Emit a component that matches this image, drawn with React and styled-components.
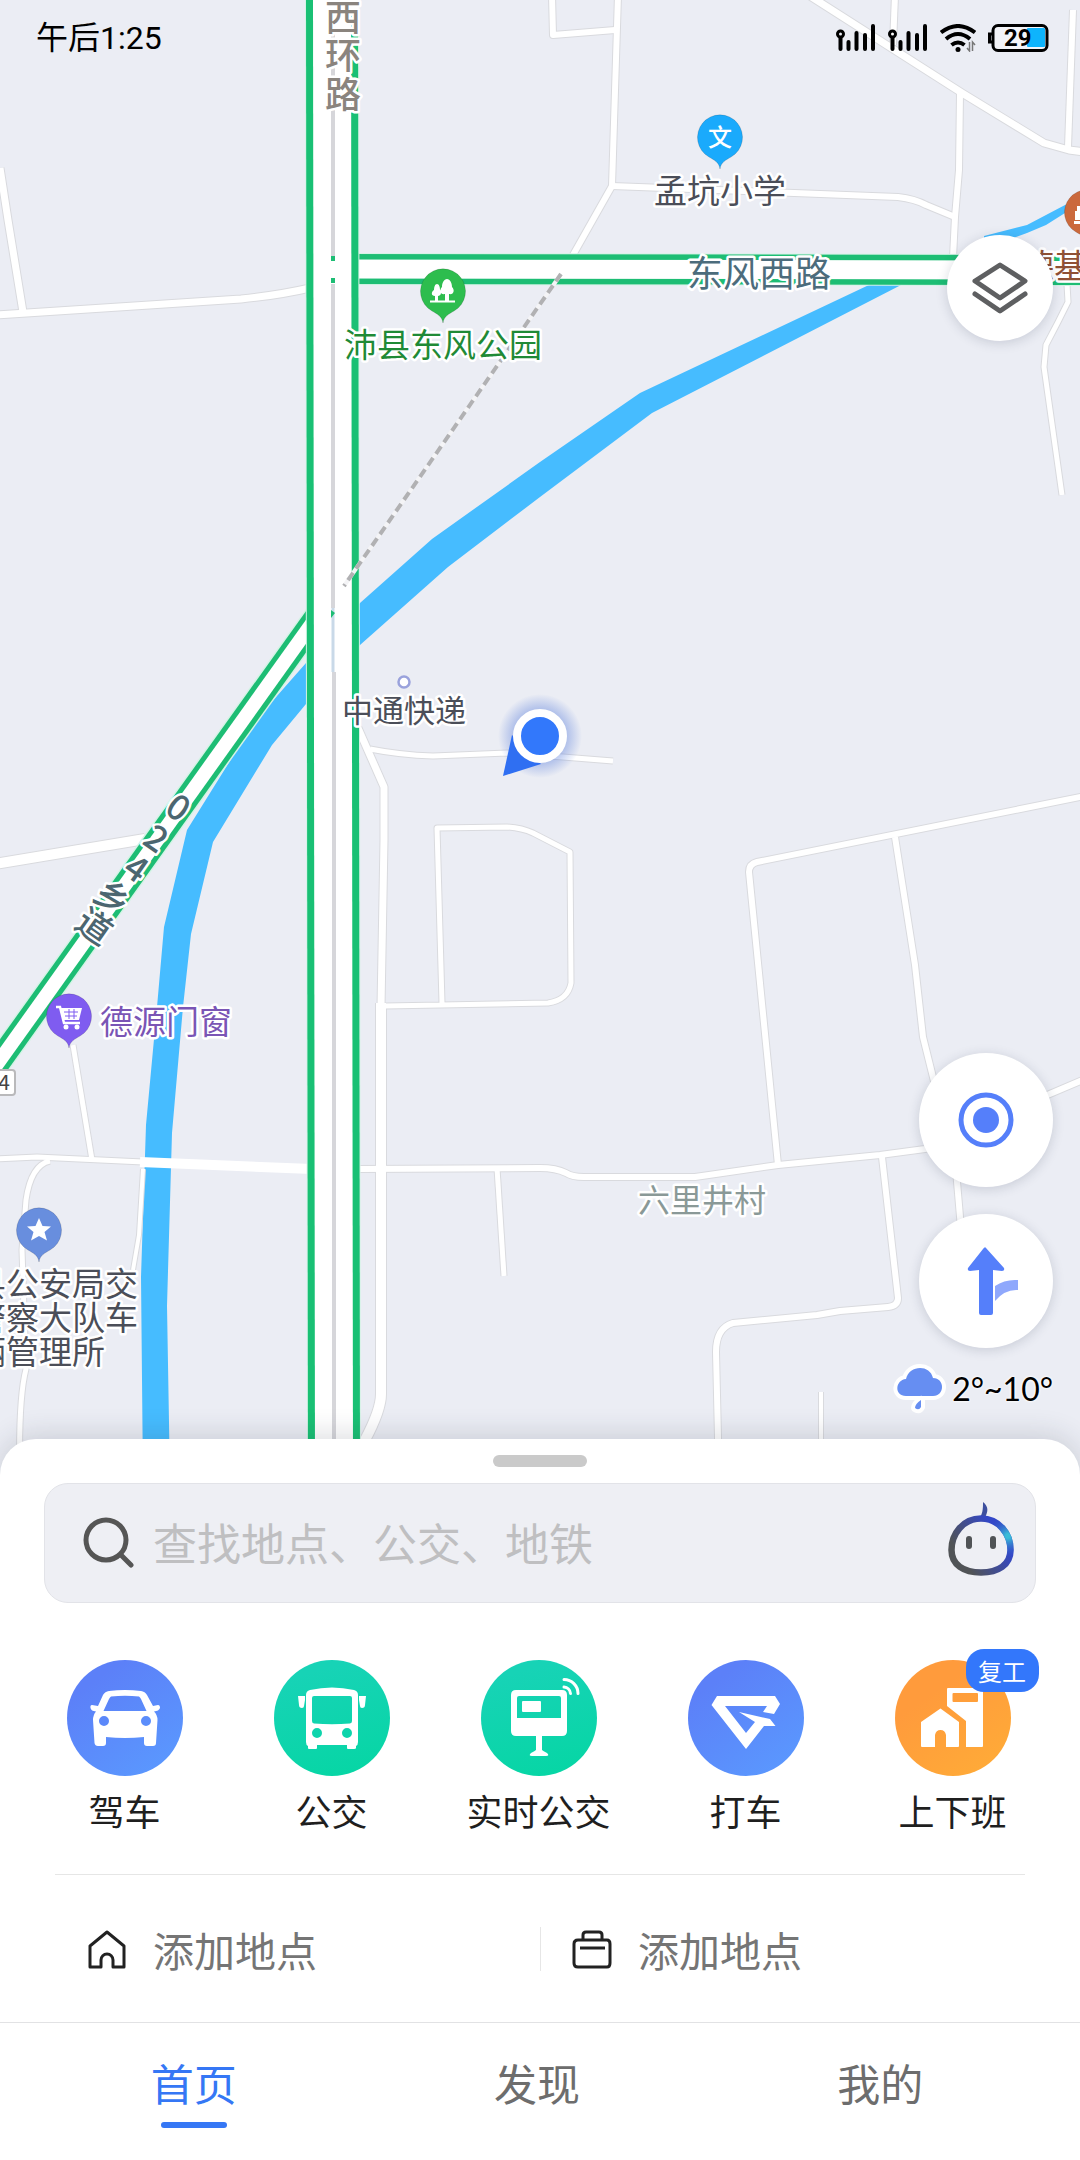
import React, { useState } from 'react';
import styled, { createGlobalStyle } from 'styled-components';

const GlobalStyle = createGlobalStyle`
  * {
    box-sizing: border-box;
  }
  body {
    margin: 0;
    background: #fff;
    font-family: 'Noto Sans CJK SC', sans-serif;
  }
  button,
  input {
    font: inherit;
  }
`;

const Screen = styled.div`
  display: flex;
  flex-direction: column;
  min-height: 100vh;
`;

const MapArea = styled.main`
  position: relative;
  display: flex;
  flex: 1;
  flex-direction: column;
  overflow: hidden;
  background: #ebedf4;
`;

const MapCanvas = styled.svg`
  position: absolute;
  inset: 0;
  width: 100%;
  height: 100%;
`;

const MapLabel = styled.text`
  font-family: 'Noto Sans CJK SC', sans-serif;
  font-size: ${({ $size }) => $size || 33}px;
  fill: ${({ $color }) => $color || '#4b4e58'};
  stroke: #fff;
  stroke-width: 5px;
  stroke-linejoin: round;
  paint-order: stroke;
  text-anchor: ${({ $anchor }) => $anchor || 'middle'};
`;

const RoadLabel = styled(MapLabel)`
  font-weight: 500;
`;

const RoadNumber = styled(MapLabel)`
  stroke: none;
`;

const PinGlyph = styled(MapLabel)`
  font-weight: 500;
  stroke: none;
`;

const StatusBar = styled.header`
  position: relative;
  display: flex;
  align-items: center;
  justify-content: space-between;
  height: 76px;
  padding: 0 31px 0 36px;
  color: #000;
`;

const Clock = styled.time`
  font-family: Roboto, 'Noto Sans CJK SC', sans-serif;
  font-size: 32px;
  line-height: 44px;
`;

const StatusIcons = styled.div`
  display: flex;
  gap: 12px;
`;

const BatteryText = styled.text`
  font-family: Roboto, sans-serif;
  font-size: 24px;
  font-weight: 700;
`;

const RoundButton = styled.button`
  display: flex;
  align-items: center;
  justify-content: center;
  width: ${({ $size }) => $size}px;
  height: ${({ $size }) => $size}px;
  padding: 0;
  border: 0;
  border-radius: 50%;
  background: #fff;
  box-shadow: 0 2px 12px rgba(40, 50, 80, 0.18);
`;

const MapControls = styled.div`
  position: relative;
  display: flex;
  flex: 1;
  flex-direction: column;
  align-items: flex-end;
  justify-content: space-between;
  padding: 159px 27px 62px;
`;

const ControlStack = styled.div`
  display: flex;
  flex-direction: column;
  align-items: flex-end;
  gap: 27px;
`;

const Weather = styled.div`
  display: flex;
  align-items: center;
  gap: 6px;
  margin-top: -14px;
  font-family: Lato, 'Noto Sans CJK SC', sans-serif;
  font-size: 32px;
  line-height: 56px;
  color: #000;
  text-shadow: 0 0 3px #fff, 0 0 3px #fff;
`;

const Sheet = styled.section`
  position: relative;
  margin-top: -40px;
  padding-top: 16px;
  border-radius: 36px 36px 0 0;
  background: #fff;
  box-shadow: 0 -4px 28px rgba(40, 45, 60, 0.16);
`;

const Handle = styled.div`
  width: 94px;
  height: 12px;
  margin: 0 auto 16px;
  border-radius: 6px;
  background: #cacaca;
`;

const SearchForm = styled.form`
  display: flex;
  align-items: center;
  gap: 18px;
  height: 120px;
  margin: 0 44px;
  padding: 0 21px 2px 38px;
  border: 1px solid #e2e3e8;
  border-radius: 24px;
  background: #eeeff4;
`;

const SearchInput = styled.input`
  flex: 1;
  min-width: 0;
  padding: 0;
  border: 0;
  outline: 0;
  background: transparent;
  font-size: 44px;
  line-height: 60px;
  color: #222;

  &::placeholder {
    color: #bfbfc1;
    opacity: 1;
  }
`;

const BotButton = styled.button`
  display: flex;
  margin-bottom: 6px;
  padding: 0;
  border: 0;
  background: none;
`;

const Shortcuts = styled.div`
  display: grid;
  grid-template-columns: repeat(5, 1fr);
  padding: 57px 24px 40px 21px;
`;

const Shortcut = styled.button`
  display: flex;
  flex-direction: column;
  align-items: center;
  gap: 10px;
  padding: 0;
  border: 0;
  background: none;
  font-size: 36px;
  line-height: 48px;
  color: #1f1f1f;
`;

const ShortcutIcon = styled.span`
  position: relative;
  width: 116px;
  height: 116px;
  border-radius: 50%;
  background: ${({ $fill }) => $fill};

  svg {
    display: block;
  }
`;

const Badge = styled.span`
  position: absolute;
  top: -11px;
  left: 71px;
  width: 73px;
  border-radius: 18px;
  background: #3377fb;
  color: #fff;
  font-size: 24px;
  line-height: 43px;
  text-align: center;
`;

const Places = styled.div`
  display: grid;
  grid-template-columns: 1fr 1fr;
  margin: 0 55px;
  padding: 52px 0 51px;
  border-top: 1px solid #e6e6e6;
`;

const Place = styled.button`
  display: flex;
  align-items: center;
  gap: 26px;
  height: 44px;
  padding: 0 0 0 31px;
  border: 0;
  border-left: 1px solid ${({ $divided }) => ($divided ? '#e6e6e6' : 'transparent')};
  background: none;
  font-size: 41px;
  line-height: 44px;
  color: #757575;
`;

const TabBar = styled.nav`
  position: relative;
  display: grid;
  grid-template-columns: repeat(3, 1fr);
  padding: 29px 28px 32px 22px;
  border-top: 1px solid #e2e2e4;
  background: #fff;
`;

const Tab = styled.button`
  display: flex;
  flex-direction: column;
  align-items: center;
  gap: 10px;
  padding: 0;
  border: 0;
  background: none;
  font-size: 43px;
  line-height: 60px;
  color: ${({ $active }) => ($active ? '#3577f5' : '#6d6d6d')};

  &::after {
    content: '';
    width: 66px;
    height: 6px;
    border-radius: 3px;
    background: ${({ $active }) => ($active ? '#3577f5' : 'transparent')};
  }
`;

const minorRoads = [
  { d: 'M0 168L8 220L23 312', w: 7 },
  { d: 'M-5 315L134 306L241 299Q280 295 310 288', w: 7 },
  { d: 'M552 -5L553 35L615 30', w: 6 },
  { d: 'M618 -5L612 186L573 255', w: 6 },
  { d: 'M612 186L898 197Q915 199 926 205L955 217', w: 6 },
  { d: 'M810 -4L962 93L1044 143L1069 150L1085 152', w: 7 },
  { d: 'M895 -5L893 45', w: 6 },
  { d: 'M960 93L959 170L955 217L953 258', w: 6 },
  { d: 'M1073 10L1068 147', w: 6 },
  { d: 'M1067 284L1068 302L1058 322L1046 345L1044 367L1062 495', w: 5 },
  { d: 'M-5 864L145 839', w: 10 },
  { d: 'M358 728L384 787V840L381 1007', w: 7 },
  { d: 'M370 749Q400 755 433 756L507 753L563 757L613 761', w: 5 },
  { d: 'M442 1003L437 828L507 827Q522 828 533 833L570 852L571 983Q568 1000 548 1003L385 1006', w: 5 },
  { d: 'M381 1003V1394Q381 1410 365 1440L350 1470', w: 10 },
  { d: 'M1085 796L757 862Q749 864 749 872L778 1165', w: 6 },
  { d: 'M895 837L915 965L923 1037L956 1170L962 1240', w: 6 },
  { d: 'M-5 1159L37 1157L143 1162', w: 5 },
  { d: 'M358 1169L540 1168Q556 1168 566 1173Q572 1177 584 1177L695 1177L778 1165L880 1155L925 1149Q1000 1136 1045 1096L1085 1079', w: 6 },
  { d: 'M882 1157L898 1298Q898 1306 888 1307L840 1311L817 1315L733 1323Q716 1328 716 1352L719 1480', w: 6 },
  { d: 'M821 1392V1480', w: 4 },
  { d: 'M497 1168L504 1276', w: 5 },
  { d: 'M73 1045L92 1160', w: 5 },
  { d: 'M50 1161Q31 1165 26 1200L22 1250L26 1369Q18 1400 20 1480', w: 5 },
  { d: 'M143 1169L139 1235L133 1270', w: 4 },
];

const RIVER =
  'M871 284L984 258V236L1027 225L1065 205L1085 195V205L1065 213L1046 225L1027 233L1000 243L903 284L652 413L540 497L448 567L360 645L306 704L272 745L213 842L191 934L183 1007L172 1133L167 1306L170 1480H143L141 1277L146 1125L157 1007L164 927L187 830L238 748L269 705L306 663L360 603L432 539L540 462L640 393Z';

// Pin with its round head centred on (x, y)
function Pin({ x, y, color, children }) {
  return (
    <g transform={`translate(${x} ${y})`}>
      <path
        d="M0 32C-1 25 -6 23 -11 20A22.5 22.5 0 1 1 11 20C6 23 1 25 0 32Z"
        fill={color}
        stroke="#00000022"
        strokeWidth="1"
      />
      {children}
    </g>
  );
}

function CityMap() {
  return (
    <MapCanvas viewBox="0 0 1080 1480" preserveAspectRatio="xMidYMin slice" role="img" aria-label="地图">
      <defs>
        <radialGradient id="glow">
          <stop offset="0.5" stopColor="#4a72d8" stopOpacity="0.5" />
          <stop offset="1" stopColor="#4a72d8" stopOpacity="0" />
        </radialGradient>
      </defs>
      <path d={RIVER} fill="#46bcff" />
      <g fill="none" strokeLinejoin="round">
        {minorRoads.map(({ d, w }) => (
          <path key={d} d={d} stroke="#d9dade" strokeWidth={w + 2} />
        ))}
        {minorRoads.map(({ d, w }) => (
          <path key={d} d={d} stroke="#fff" strokeWidth={w} />
        ))}
        <path d="M140 1162L312 1169" stroke="#fff" strokeWidth="10" />

        <path d="M333 594L-10 1074" stroke="#d5f3e6" strokeWidth="27" />
        <path d="M333 594L-10 1074" stroke="#1dbd74" strokeWidth="24" />
        <path d="M333 594L-10 1074" stroke="#fff" strokeWidth="14" />
        <path d="M340 269L1085 270" stroke="#d5f3e6" strokeWidth="32" />
        <path d="M340 269L1085 270" stroke="#1dbd74" strokeWidth="30" />
        <path d="M340 269L1085 270" stroke="#fff" strokeWidth="19" />

        <path d="M332 -5L334 1480" stroke="#d5f3e6" strokeWidth="54" />
        <path d="M332 -5L334 1480" stroke="#19c074" strokeWidth="52" />
        <path d="M332 -5L334 1480" stroke="#fff" strokeWidth="38" />
        <path d="M333 -5V256M333 284V608M334 672V1480" stroke="#d6d6da" strokeWidth="4" />
        <path d="M333 608V672" stroke="#c9d9e8" strokeWidth="3" />
        <path d="M333 256V261M333 278V283" stroke="#1dbd74" strokeWidth="4" />
        <path d="M331 610L335 613L331 618Z" fill="#1dbd74" />
        <path d="M561 274L344 586" stroke="#f4f4f6" strokeWidth="4" />
        <path d="M561 274L344 586" stroke="#b1b1b3" strokeWidth="4" strokeDasharray="9 5" />
      </g>

      <RoadLabel x="343" y="31" $size={36} $color="#8a847e">西</RoadLabel>
      <RoadLabel x="343" y="69" $size={36} $color="#8a847e">环</RoadLabel>
      <RoadLabel x="343" y="108" $size={36} $color="#8a847e">路</RoadLabel>
      <MapLabel x="759" y="287" $size={36} $color="#4c6c7c">东风西路</MapLabel>
      <MapLabel x="720" y="203">孟坑小学</MapLabel>
      <MapLabel x="443" y="357" $color="#1f8a36">沛县东风公园</MapLabel>
      <MapLabel x="404" y="722" $size={31}>中通快递</MapLabel>
      <MapLabel x="166" y="1034" $color="#7a55b5">德源门窗</MapLabel>
      <MapLabel x="702" y="1212" $size={32} $color="#8a9997">六里井村</MapLabel>
      <MapLabel x="-27" y="1296" $anchor="start">县公安局交</MapLabel>
      <MapLabel x="-27" y="1330" $anchor="start">警察大队车</MapLabel>
      <MapLabel x="-27" y="1364" $anchor="start">辆管理所</MapLabel>
      <MapLabel x="1021" y="278" $anchor="start" $color="#8f5034">德基</MapLabel>

      {[
        ['0', 178, 808],
        ['2', 156, 839],
        ['4', 136, 869],
        ['乡', 112, 898],
        ['道', 94, 927],
      ].map(([char, x, y]) => (
        <RoadLabel key={char} transform={`translate(${x} ${y}) rotate(35)`} y="12" $size={35} $color="#4c6670">
          {char}
        </RoadLabel>
      ))}

      <rect x="-30" y="1070" width="45" height="25" rx="3" fill="#fff" stroke="#b9b9bb" strokeWidth="2" />
      <RoadNumber x="4" y="1090" $size={21} $color="#444">4</RoadNumber>

      <Pin x={720} y={137} color="#1aaafc">
        <PinGlyph y="9" $size={24} $color="#fff">文</PinGlyph>
      </Pin>
      <Pin x={443} y={291} color="#2dbd4e">
        <path
          d="M-13 9.500H12V11.500H-13ZM2 10V3C-3 4 -4 -1 -1 -4C-1 -8 1 -12 4 -12C7 -12 9 -8 9 -4C12 -1 11 4 6 3V10ZM-8 10V5C-12 5 -12 1 -9 -1C-9 -4 -8 -7 -6 -7C-4 -7 -3 -4 -3 -1C-1 1 -2 5 -5 5V10Z"
          fill="#fff"
        />
      </Pin>
      <Pin x={69} y={1016} color="#7f5cf0">
        <path d="M-13 -9H-9L-5 7H11" fill="none" stroke="#fff" strokeWidth="2.500" />
        <path d="M-9 -8H13L10 4H-6Z" fill="#fff" />
        <path d="M-5 -4H9M-4 0H8M0 -7V3M5 -7V3" stroke="#7f5cf0" strokeWidth="1" />
        <circle cx="-3" cy="11" r="2.500" fill="#fff" />
        <circle cx="8" cy="11" r="2.500" fill="#fff" />
      </Pin>
      <Pin x={39} y={1230} color="#688ede">
        <path d="M0 -12L3.500 -4L12 -3.500L5.500 2L8 10.500L0 6L-8 10.500L-5.500 2L-12 -3.500L-3.500 -4Z" fill="#fff" />
      </Pin>
      <Pin x={1087} y={212} color="#cb693c">
        <path d="M-12 8V-1H-10V-6H10V-1H12V8ZM-13 9H13V12H-13Z" fill="#fff" />
      </Pin>

      <circle cx="404" cy="682" r="5.500" fill="#fff" stroke="#9aa2dc" strokeWidth="2.500" />
      <circle cx="540" cy="736" r="42" fill="url(#glow)" />
      <path d="M512 735L503 776L541 764Z" fill="#2f6ff2" />
      <circle cx="540" cy="736" r="23" fill="#3278fb" stroke="#fff" strokeWidth="8" />
    </MapCanvas>
  );
}

function SignalIcon() {
  return (
    <svg width="40" height="28" fill="none" stroke="#000" strokeWidth="4" strokeLinecap="round">
      <circle cx="4.500" cy="10" r="3" strokeWidth="3" />
      <path d="M4.500 14V25M12.500 18V25M20.500 9V25M29 11V25M37 2V25" />
    </svg>
  );
}

function WifiIcon() {
  return (
    <svg width="36" height="28" fill="none" stroke="#000" strokeWidth="4">
      <path d="M1 8.500Q18 -4.500 35 8.500M6 15Q18 5 30 15M11.500 21Q18 16 24.500 21" />
      <circle cx="18" cy="25.500" r="2.500" fill="#000" stroke="none" />
      <path d="M29.500 18V27L27 24M32.500 27V18L35 21" stroke="#777" strokeWidth="1.500" />
    </svg>
  );
}

function BatteryIcon() {
  return (
    <svg width="61" height="28">
      <path d="M4 10H1.500V18H4" fill="none" stroke="#000" strokeWidth="3" />
      <rect x="5" y="1.500" width="54" height="25" rx="5" fill="#f3f4f8" stroke="#000" strokeWidth="3" />
      <rect x="39" y="4" width="18" height="19" rx="1" fill="#0eb4fc" />
      <BatteryText x="16" y="22">29</BatteryText>
    </svg>
  );
}

function SearchIcon() {
  return (
    <svg width="52" height="52" fill="none" stroke="#555" strokeWidth="5" strokeLinecap="round">
      <circle cx="23" cy="24" r="20" />
      <path d="M38 39L48 49" />
    </svg>
  );
}

function BotIcon() {
  return (
    <svg width="66" height="75" viewBox="0 0 66 75">
      <defs>
        <linearGradient id="botBase" x1="0" y1="1" x2="1" y2="0.400">
          <stop offset="0.250" stopColor="#505356" />
          <stop offset="0.900" stopColor="#3347c8" />
        </linearGradient>
        <radialGradient id="botShine" gradientUnits="userSpaceOnUse" cx="60" cy="34" r="22">
          <stop offset="0.100" stopColor="#39bcd8" />
          <stop offset="1" stopColor="#3347c8" stopOpacity="0" />
        </radialGradient>
      </defs>
      <path d="M35 0C41 5 40 9 37 16H32C35 10 35 6 35 0Z" fill="#3d4f9e" />
      {['url(#botBase)', 'url(#botShine)'].map((paint) => (
        <path
          key={paint}
          d="M33 16.500C51 16.500 62.500 32 62.500 48C62.500 63 50 70.500 33 70.500S3.500 63 3.500 48C3.500 32 15 16.500 33 16.500Z"
          fill="none"
          stroke={paint}
          strokeWidth="6.500"
        />
      ))}
      <rect x="18" y="34" width="6" height="13" rx="3" fill="#505356" />
      <rect x="42" y="34" width="6" height="13" rx="3" fill="#505356" />
    </svg>
  );
}

function LayersIcon() {
  return (
    <svg width="58" height="54" fill="none" stroke="#5e5f61" strokeWidth="5" strokeLinejoin="round" strokeLinecap="round">
      <path d="M29 4L54 20L29 37L4 20Z" />
      <path d="M4 33L29 50L54 33" />
    </svg>
  );
}

function LocateIcon() {
  return (
    <svg width="56" height="56">
      <circle cx="28" cy="28" r="25" fill="none" stroke="#557ffa" strokeWidth="5" />
      <circle cx="28" cy="28" r="13" fill="#557ffa" />
    </svg>
  );
}

function RouteIcon() {
  return (
    <svg width="64" height="70">
      <path
        d="M32 2L50 22Q51 25 48 25L39 24V67Q39 69 37 69H27Q25 69 25 67V24L16 25Q13 25 14 22L29 3Q31 0 32 2Z"
        fill="#557ffa"
      />
      <path d="M41 40Q51 33 64 34V44Q51 43 41 55Z" fill="#8fa8fc" />
    </svg>
  );
}

function RainIcon() {
  return (
    <svg width="54" height="56" fill="#668ef2" stroke="#fff" strokeWidth="8" strokeLinejoin="round" paintOrder="stroke">
      <path d="M14 35C2 35 3 19 14 18C17 4 38 3 41 17C53 17 53 35 41 35Z" />
      <path d="M29 39V46Q27 50 23 47Q23 43 29 39Z" />
    </svg>
  );
}

const shortcuts = [
  {
    label: '驾车',
    fill: 'linear-gradient(145deg, #5c80f8 20%, #5a9bff)',
    d: 'M42 31Q58 29 74 31Q78 31.500 80 35L86 46L91 45Q93 45 93 48Q92 51 87 51.500Q90.500 55 90.500 60L89 83Q89 86 86 86H80Q77 86 77 83V77Q58 79 39 77V83Q39 86 36 86H31Q28 86 27.500 83L26 60Q26 55 29 51.500Q24 51 23.500 48Q23 45 25 45L31 46L36 35Q38 31.500 42 31ZM44 36.500Q43 37 42 39L36.500 51H79.500L74 39Q73 37 72 36.500Q58 35 44 36.500ZM42 61A5 5 0 1 0 32 61A5 5 0 1 0 42 61ZM84 61A5 5 0 1 0 74 61A5 5 0 1 0 84 61Z',
  },
  {
    label: '公交',
    fill: 'linear-gradient(165deg, #17d3b6 15%, #05d6a3)',
    d: 'M36 30Q58 25 80 30Q84 31 84 35V82Q84 85 82 86V88Q82 89 80 89H74Q73 89 73 88V85H43V88Q43 89 42 89H35Q34 89 34 88V86Q32 85 32 82V35Q32 31 36 30ZM40 36Q38 36 38 38V61Q38 63 40 63.500Q58 65 76 63.500Q78 63 78 61V38Q78 36 76 36ZM48 73A5 5 0 1 0 38 73A5 5 0 1 0 48 73ZM78 73A5 5 0 1 0 68 73A5 5 0 1 0 78 73ZM24 36H31V40L30 46Q30 48 28 48Q25 48 25 45ZM92 36H85V40L86 46Q86 48 88 48Q91 48 91 45Z',
  },
  {
    label: '实时公交',
    fill: 'linear-gradient(165deg, #17d3b6 15%, #05d6a3)',
    d: 'M35 30H81Q86 30 86 35V71Q86 76 81 76H61V90Q62 91 66 93Q69 96 65 96H51Q47 96 50 93Q54 91 55 90V76H35Q30 76 30 71V35Q30 30 35 30ZM38 36Q36 36 36 38V58H80V38Q80 36 78 36ZM42 41H59Q60 41 60 42V51Q60 52 59 52H42Q41 52 41 51V42Q41 41 42 41Z',
    arcs: 'M83 19.500A14 14 0 0 1 97 33.500M83 27A7 7 0 0 1 89.500 33.500',
  },
  {
    label: '打车',
    fill: 'linear-gradient(145deg, #5c80f8 20%, #5a9bff)',
    d: 'M29 36H87L92 44L86 54L75 52L79 46H37L58 73L67 62L51 52L82 59L87.500 66H76L58 89L23.500 45Z',
  },
  {
    label: '上下班',
    fill: 'linear-gradient(145deg, #ff9b3c 30%, #ffad37)',
    badge: '复工',
    d: 'M45.500 48.500L64 62V86Q64 87 63 87H51V75Q50 70 45.500 70Q41 70 40 75V87H27Q26 87 26 86V62ZM53 28H87Q88 28 88 29V86Q88 87 87 87H71V61L52 46V29Q52 28 53 28ZM58.500 33Q57.500 33 57.500 34V41Q57.500 42 58.500 42H82Q83 42 83 41V34Q83 33 82 33Z',
  },
];

const places = [
  { id: 'home', d: 'M3 38V17L20 3L37 17V38H26V31A6 6 0 0 0 14 31V38Z' },
  { id: 'work', d: 'M11 11V6Q11 3 14 3H27Q30 3 30 6V11M6 11H35Q38 11 38 15V34Q38 38 35 38H6Q2 38 2 34V15Q2 11 6 11ZM8 19H33' },
];

const tabs = ['首页', '发现', '我的'];

function App() {
  const [tab, setTab] = useState(tabs[0]);

  return (
    <Screen>
      <GlobalStyle />
      <MapArea>
        <CityMap />
        <StatusBar>
          <Clock>午后1:25</Clock>
          <StatusIcons>
            <SignalIcon />
            <SignalIcon />
            <WifiIcon />
            <BatteryIcon />
          </StatusIcons>
        </StatusBar>
        <MapControls>
          <RoundButton type="button" $size={106} aria-label="图层">
            <LayersIcon />
          </RoundButton>
          <ControlStack>
            <RoundButton type="button" $size={134} aria-label="定位">
              <LocateIcon />
            </RoundButton>
            <RoundButton type="button" $size={134} aria-label="路线">
              <RouteIcon />
            </RoundButton>
            <Weather>
              <RainIcon />
              <span>2°~10°</span>
            </Weather>
          </ControlStack>
        </MapControls>
      </MapArea>

      <Sheet>
        <Handle />
        <SearchForm role="search" onSubmit={(e) => e.preventDefault()}>
          <SearchIcon />
          <SearchInput type="text" aria-label="搜索" placeholder="查找地点、公交、地铁" />
          <BotButton type="button" aria-label="语音助手">
            <BotIcon />
          </BotButton>
        </SearchForm>
        <Shortcuts>
          {shortcuts.map(({ label, fill, d, arcs, badge }) => (
            <Shortcut key={label} type="button">
              <ShortcutIcon $fill={fill}>
                <svg width="116" height="116">
                  <path d={d} fill="#fff" fillRule="evenodd" />
                  {arcs && <path d={arcs} fill="none" stroke="#fff" strokeWidth="3" strokeLinecap="round" />}
                </svg>
                {badge && <Badge>{badge}</Badge>}
              </ShortcutIcon>
              {label}
            </Shortcut>
          ))}
        </Shortcuts>
        <Places>
          {places.map(({ id, d }, i) => (
            <Place key={id} type="button" $divided={i > 0}>
              <svg width="40" height="40" fill="none" stroke="#222" strokeWidth="3" strokeLinejoin="round">
                <path d={d} />
              </svg>
              添加地点
            </Place>
          ))}
        </Places>
      </Sheet>

      <TabBar>
        {tabs.map((name) => (
          <Tab key={name} type="button" $active={name === tab} onClick={() => setTab(name)}>
            {name}
          </Tab>
        ))}
      </TabBar>
    </Screen>
  );
}

export default App;
